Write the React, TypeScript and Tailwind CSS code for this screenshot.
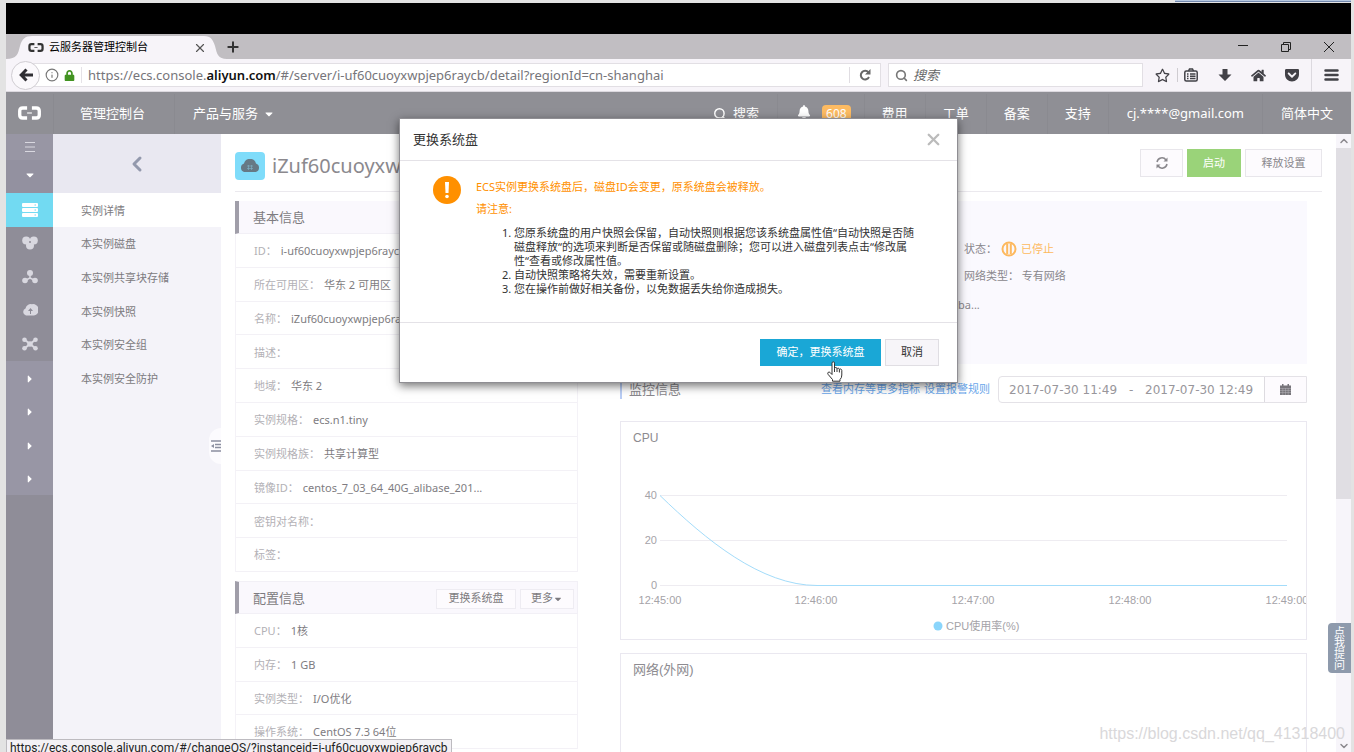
import type { ReactNode } from "react";
import { Search, X, Plus, Info, ChevronLeft, ChevronUp, ChevronDown } from "lucide-react";
import { FaBell, FaGetPocket, FaHome, FaLock, FaRegStar, FaCaretDown, FaCaretRight } from "react-icons/fa";

const menuItems = ["实例详情", "本实例磁盘", "本实例共享块存储", "本实例快照", "本实例安全组", "本实例安全防护"];

const basicInfo = [
  ["ID：", "i-uf60cuoyxwpjep6raycb"],
  ["所在可用区：", "华东 2 可用区"],
  ["名称：", "iZuf60cuoyxwpjep6raycbZ"],
  ["描述：", ""],
  ["地域：", "华东 2"],
  ["实例规格：", "ecs.n1.tiny"],
  ["实例规格族：", "共享计算型"],
  ["镜像ID：", "centos_7_03_64_40G_alibase_201..."],
  ["密钥对名称：", ""],
  ["标签：", ""],
];

const configInfo = [
  ["CPU：", "1核"],
  ["内存：", "1 GB"],
  ["实例类型：", "I/O优化"],
  ["操作系统：", "CentOS 7.3 64位"],
];

const timeTicks = [
  { x: 39, label: "12:45:00" },
  { x: 195, label: "12:46:00" },
  { x: 352, label: "12:47:00" },
  { x: 509, label: "12:48:00" },
  { x: 666, label: "12:49:00" },
];

const valueTicks = [
  { y: 73, label: "40" },
  { y: 118, label: "20" },
  { y: 163, label: "0" },
];

function AliyunLogo({ className }: { className?: string }) {
  return (
    <svg viewBox="0 0 24 14" className={className} fill="none" stroke="currentColor" strokeWidth="3.500">
      <path d="M9.500 1.800H5Q1.800 1.800 1.800 5V9Q1.800 12.200 5 12.200H9.500" />
      <path d="M14.500 1.800H19Q22.200 1.800 22.200 5V9Q22.200 12.200 19 12.200H14.500" />
      <path d="M9.500 7H14.500" strokeWidth="1.200" />
    </svg>
  );
}

function TabStrip() {
  return (
    <div className="flex h-[25px] items-end bg-[#c1bec2]">
      <div className="relative flex h-[23px] w-[221px] items-center pr-5 pl-[22px] text-black">
        <svg className="absolute inset-0 h-full w-full" viewBox="0 0 221 23" preserveAspectRatio="none" fill="#f7f4f9">
          <path d="M0 23C11 23 12 18 14 10C16 3 19 0 26 0H198C205 0 207 4 209 10C211 18 212 23 221 23Z" />
        </svg>
        <AliyunLogo className="relative h-[9px] w-4 shrink-0 text-[#333]" />
        <span className="relative ml-[5px] flex-1 text-[11px]">云服务器管理控制台</span>
        <button aria-label="关闭标签页" className="relative">
          <X className="size-3.5 text-[#555]" strokeWidth={2} />
        </button>
      </div>
      <button aria-label="新标签页" className="-ml-0.5 flex h-6 items-center">
        <Plus className="size-4 text-[#333]" strokeWidth={3} />
      </button>
      <div className="ml-auto flex h-full items-center gap-[33px] pr-[17px] text-[#222]">
        <button aria-label="最小化">
          <svg viewBox="0 0 10 10" className="size-2.5" stroke="currentColor"><path d="M0 3.500H10" /></svg>
        </button>
        <button aria-label="还原">
          <svg viewBox="0 0 10 10" className="size-2.5" fill="none" stroke="currentColor">
            <path d="M.5 2.500H7.500V9.500H.5Z" />
            <path d="M2.500 2.500V.5H9.500V7.500H7.500" />
          </svg>
        </button>
        <button aria-label="关闭">
          <svg viewBox="0 0 10 10" className="size-2.5" stroke="currentColor"><path d="M0 0L10 10M10 0L0 10" /></svg>
        </button>
      </div>
    </div>
  );
}

function AddressBar() {
  return (
    <div className="flex h-[33px] items-center border-b border-[#dcd9df] bg-[#f7f4f9] pl-[5px] text-[#424147]">
      <button aria-label="后退" className="z-10 flex size-[29px] shrink-0 items-center justify-center rounded-full border border-[#d0cdd2] bg-[#fbf9fc]">
        <svg viewBox="0 0 14 14" className="size-3.5" fill="none" stroke="#2f2e33" strokeWidth="3">
          <path d="M7.500 1.500L2.200 7L7.500 12.500M2.500 7H14" />
        </svg>
      </button>
      <div className="-ml-3 flex h-6 flex-1 items-center border border-[#e2dfe4] bg-white pl-4">
        <Info className="size-3.5 shrink-0 text-[#777]" strokeWidth={2} />
        <FaLock className="ml-[5px] size-[11px] shrink-0 text-[#429321]" />
        <div role="textbox" aria-label="地址" className="ml-1.5 flex-1 border-l border-[#e5e2e7] pl-1.5 text-[13px] leading-4 whitespace-nowrap text-[#76757a]">
          https://ecs.console.<span className="font-semibold text-[#111]">aliyun.com</span>/#/server/i-uf60cuoyxwpjep6raycb/detail?regionId=cn-shanghai
        </div>
        <button aria-label="刷新" className="flex h-4 w-[31px] items-center justify-center border-l border-[#e0dde2]">
          <svg viewBox="0 0 12 12" className="size-3" fill="none" stroke="#666" strokeWidth="2">
            <path d="M9.500 3.500A4.300 4.300 0 1 0 10 8" />
            <path d="M11.500 0V5.500H6Z" fill="#666" stroke="none" />
          </svg>
        </button>
      </div>
      <label className="ml-[7px] flex h-6 w-[255px] items-center border border-[#e2dfe4] bg-white pl-1.5">
        <Search className="size-[13px] shrink-0 text-[#777]" strokeWidth={3} />
        <input placeholder="搜索" aria-label="搜索" className="ml-[5px] w-full pt-0.5 text-[13px] italic outline-none placeholder:text-[#666]" />
      </label>
      <div className="ml-3 flex h-full items-center">
        <button aria-label="书签" className="w-4"><FaRegStar className="size-[15px]" /></button>
        <span className="mx-1.5 h-3.5 w-px bg-[#cfccd1]" />
        <button aria-label="书签列表">
          <svg viewBox="0 0 14 14" className="size-3.5" fill="none" stroke="currentColor" strokeWidth="1.500">
            <rect x=".8" y="3" width="12.400" height="10" rx="1.500" />
            <path d="M4.500 3L5.500 1H8.500L9.500 3M3 6H4.500M6 6H11.500M3 8.200H4.500M6 8.200H11.500M3 10.500H4.500M6 10.500H11.500" />
          </svg>
        </button>
        <button aria-label="下载" className="ml-5">
          <svg viewBox="0 0 14 14" className="size-3.5" fill="currentColor"><path d="M4.500 1H9.500V6.500H13.500L7 13L.5 6.500H4.500Z" /></svg>
        </button>
        <button aria-label="主页" className="ml-[19px]"><FaHome className="size-[15px]" /></button>
        <button aria-label="Pocket" className="ml-[18px]"><FaGetPocket className="size-4" /></button>
        <span className="ml-[11px] h-full w-px bg-[#dcd9df]" />
        <button aria-label="菜单" className="mx-3">
          <svg viewBox="0 0 15 12" className="h-3 w-[15px]" stroke="currentColor" strokeWidth="2.500" strokeLinecap="round">
            <path d="M1.500 1.500H13.500M1.500 6H13.500M1.500 10.500H13.500" />
          </svg>
        </button>
      </div>
    </div>
  );
}

function TopNav() {
  return (
    <nav className="flex h-[42px] items-stretch bg-[#8f8f95] pt-0.5 text-[13px] whitespace-nowrap text-white *:flex *:items-center *:border-[#8a8a90]">
      <a href="#" aria-label="首页" className="w-12 border-r pb-0.5 pl-3"><AliyunLogo className="h-3.5 w-[23px]" /></a>
      <a href="#" className="w-[121px] border-r pl-[26px]">管理控制台</a>
      <a href="#" className="pl-[18px]">产品与服务<FaCaretDown className="ml-[5px] size-3" /></a>
      <a href="#" className="ml-auto pr-[18px]"><Search className="mr-1.5 size-3.5" strokeWidth={2.500} />搜索</a>
      <a href="#" className="border-l px-[13px]">
        <FaBell className="mx-1.5 mb-1 size-3.5" />
        <span className="ml-[5px] rounded-sm bg-[#fdbb62] px-1 text-xs leading-[18px]">608</span>
      </a>
      <a href="#" className="border-l px-[17px]">费用</a>
      <a href="#" className="border-l px-[17px]">工单</a>
      <a href="#" className="border-l px-[17px]">备案</a>
      <a href="#" className="border-l px-[17px]">支持</a>
      <a href="#" className="border-l px-[18px]">cj.****@gmail.com</a>
      <a href="#" className="border-l px-[18px]">简体中文</a>
    </nav>
  );
}

function RailButton({ label, className, children }: { label: string; className: string; children: ReactNode }) {
  return (
    <button aria-label={label} className={`flex items-center justify-center ${className}`}>
      {children}
    </button>
  );
}

function ProductRail() {
  return (
    <aside className="w-[47px] shrink-0 bg-[#8f8d98] text-[#d9d8e0]">
      <button aria-label="展开" className="flex h-[26px] w-full items-center justify-center bg-[#9896a4]">
        <svg viewBox="0 0 10 10" className="size-2.5" stroke="currentColor"><path d="M0 .5H10M0 5H10M0 9.500H10" /></svg>
      </button>
      <button aria-label="产品" className="flex h-[33px] w-full items-center justify-center bg-[#9391a0] pb-1">
        <FaCaretDown className="size-3 text-white" />
      </button>
      <div className="grid h-[302px] auto-rows-fr">
        <RailButton label="云服务器" className="bg-[#72daf2] text-white">
          <svg viewBox="0 0 16 14" className="h-3.5 w-4" fill="currentColor">
            <rect width="16" height="4" rx="1" />
            <rect y="5" width="16" height="4" rx="1" />
            <rect y="10" width="16" height="4" rx="1" />
            <path d="M12.500 2H14M12.500 7H14M12.500 12H14" stroke="#72daf2" />
          </svg>
        </RailButton>
        <RailButton label="数据库" className="bg-[#8f8d98]">
          <svg viewBox="0 0 16 14" className="h-3.5 w-4" fill="currentColor">
            <circle cx="4.200" cy="4.500" r="4" />
            <circle cx="11.800" cy="4.500" r="4" />
            <circle cx="8" cy="9.500" r="4" />
            <circle cx="8" cy="6" r="1" fill="#8f8d98" />
          </svg>
        </RailButton>
        <RailButton label="负载均衡" className="bg-[#8f8d98]">
          <svg viewBox="0 0 16 14" className="h-3.5 w-4" fill="currentColor">
            <path d="M8 4V8L3 10.500M8 8L13 10.500" fill="none" stroke="currentColor" strokeWidth="1.500" />
            <circle cx="8" cy="3" r="3" />
            <circle cx="3" cy="10.500" r="2.800" />
            <circle cx="13" cy="10.500" r="2.800" />
          </svg>
        </RailButton>
        <RailButton label="对象存储" className="bg-[#8f8d98]">
          <svg viewBox="0 0 16 14" className="h-3.5 w-4" fill="currentColor">
            <path d="M4 12.500A3.700 3.700 0 0 1 3.500 5.500A5.300 5.300 0 0 1 10 1.200A5.700 5.700 0 0 1 12 12.500Z" />
            <path d="M8 11V8H6L8.500 5L11 8H9V11Z" fill="#8f8d98" />
          </svg>
        </RailButton>
        <RailButton label="专有网络" className="bg-[#8f8d98]">
          <svg viewBox="0 0 16 14" className="h-3.5 w-4" fill="currentColor">
            <path d="M3 3L13 11M13 3L3 11" stroke="currentColor" strokeWidth="2" />
            <circle cx="2.500" cy="2.800" r="2.300" />
            <circle cx="13.500" cy="2.800" r="2.300" />
            <circle cx="2.500" cy="11.200" r="2.300" />
            <circle cx="13.500" cy="11.200" r="2.300" />
            <circle cx="8" cy="7" r="2.800" />
          </svg>
        </RailButton>
        {["一", "二", "三", "四"].map((n) => (
          <RailButton key={n} label={`分组${n}`} className="bg-[#9896a5] pt-0.5 text-white">
            <FaCaretRight className="size-3" />
          </RailButton>
        ))}
      </div>
    </aside>
  );
}

function InstanceMenu() {
  return (
    <aside className="relative w-[168px] shrink-0 bg-[#f4f3f9]">
      <button aria-label="返回" className="flex h-[59px] w-full items-center justify-center bg-[#e9e8f1]">
        <ChevronLeft className="size-6 text-[#9399ad]" strokeWidth={3} />
      </button>
      <ul className="grid h-[202px] auto-rows-fr text-[11px] text-[#7d7b80]">
        {menuItems.map((item, i) => (
          <li key={item} className={i === 0 ? "bg-white" : ""}>
            <a href="#" className="flex h-full items-center pt-0.5 pl-7">{item}</a>
          </li>
        ))}
      </ul>
      <button aria-label="收起菜单" className="absolute top-[294px] right-0 flex h-9 w-3 items-center justify-end rounded-l-full bg-[#fcfbfe]">
        <svg viewBox="0 0 10 12" className="h-3 w-2.5" stroke="#8b8fa0" strokeWidth="1.500" fill="#8b8fa0">
          <path d="M0 1H10M4 4.500H10M4 7.500H10M0 11H10" />
          <path d="M3 4L0 6L3 8Z" stroke="none" />
        </svg>
      </button>
    </aside>
  );
}

function InfoRows({ rows, className }: { rows: string[][]; className: string }) {
  return (
    <dl className={`grid auto-rows-fr border-x border-[#f4f2f7] text-[11px] ${className}`}>
      {rows.map(([label, value]) => (
        <div key={label} className="flex items-center border-b border-[#f3f1f6] pt-0.5 pl-[18px] whitespace-nowrap">
          <dt className="text-[#b3b1b6]">{label}</dt>
          <dd className="ml-1 text-[#7e7c81]">{value}</dd>
        </div>
      ))}
    </dl>
  );
}

function CpuChart() {
  return (
    <svg viewBox="0 0 685 217" className="block w-full font-['Liberation_Sans','Noto_Sans_CJK_SC',sans-serif] text-[11px]" fill="#a5a3a8">
      {valueTicks.map((tick) => (
        <g key={tick.label}>
          <path d={`M39 ${tick.y}.500H666`} stroke="#eeecf1" />
          <text x="36" y={tick.y + 4} textAnchor="end">{tick.label}</text>
        </g>
      ))}
      <path d="M39 73.500C85 118 140 163.500 196 163.500H666" fill="none" stroke="#a3dcfa" />
      {timeTicks.map((tick) => (
        <text key={tick.label} x={tick.x} y="182" textAnchor="middle">{tick.label}</text>
      ))}
      <circle cx="317" cy="204" r="4.500" fill="#8ad5fb" />
      <text x="325" y="208">CPU使用率(%)</text>
      <text x="12" y="20" className="text-xs" fill="#8d8b90">CPU</text>
    </svg>
  );
}

function InstancePage() {
  return (
    <main className="min-w-0 flex-1 overflow-hidden bg-white pr-3.5 pl-3.5">
      <header className="flex h-[58px] items-center border-b border-[#ebe9ee] text-[11px]">
        <span className="mt-1.5 flex h-7 w-[30px] items-center justify-center rounded bg-[#7fdcfa]">
          <svg viewBox="0 0 22 14" className="h-3.5 w-[22px]" fill="#667985">
            <path d="M5 13A4.500 4.500 0 0 1 5 4.500A6.200 6.200 0 0 1 17 4.500A4.500 4.500 0 0 1 17 13Z" />
            <path d="M8 7H14M8 9.500H14M9.500 6V11M12.500 6V11" stroke="#7fb4c8" strokeWidth=".6" />
          </svg>
        </span>
        <h1 className="mt-1.5 ml-[7px] flex-1 text-xl text-[#8b898e]">iZuf60cuoyxwpjep6raycbZ</h1>
        <div className="flex gap-1 text-[#89878c]">
          <button aria-label="刷新" className="flex h-7 w-[43px] items-center justify-center border border-[#e8e6eb] bg-[#fdfbfe]">
            <svg viewBox="0 0 12 12" className="size-3" fill="none" stroke="currentColor" strokeWidth="1.500">
              <path d="M1 5A5 5 0 0 1 10 3M11 7A5 5 0 0 1 2 9" />
              <path d="M11.500 .5V4.500H7.500ZM.5 11.500V7.500H4.500Z" fill="currentColor" stroke="none" />
            </svg>
          </button>
          <button className="h-7 w-[54px] bg-[#9ad379] pt-0.5 text-white">启动</button>
          <button className="h-7 w-[77px] border border-[#e8e6eb] bg-[#fdfbfe] pt-0.5">释放设置</button>
        </div>
      </header>

      <div className="flex pt-[9px]">
        <div className="flex w-[343px] shrink-0 flex-col gap-[9px]">
          <section>
            <h2 className="flex h-[33px] items-center border-b border-l-4 border-[#f2f0f6] border-l-[#a09ea9] bg-[#faf8fd] pt-0.5 pl-3.5 text-[13px] text-[#7d7b80]">
              基本信息
            </h2>
            <InfoRows rows={basicInfo} className="h-[338px]" />
          </section>
          <section>
            <div className="flex h-[33px] items-center gap-1 border border-l-4 border-[#f2f0f6] border-l-[#a09ea9] bg-[#faf8fd] pt-0.5 pr-[3px] pl-3.5 text-[11px] text-[#7d7b80]">
              <h2 className="flex-1 text-[13px]">配置信息</h2>
              <button className="h-5 w-20 border border-[#eeecf2] bg-[#fdfbfe]">更换系统盘</button>
              <button className="flex h-5 w-[54px] items-center justify-center border border-[#eeecf2] bg-[#fdfbfe]">
                更多<FaCaretDown className="size-2.5" />
              </button>
            </div>
            <InfoRows rows={configInfo} className="h-[135px]" />
          </section>
        </div>

        <div className="mr-[15px] ml-[42px] min-w-0 flex-1">
          <section className="flex h-[163px] flex-col items-start gap-[11px] bg-[#faf9fe] pt-10 pl-[336px] text-[11px] leading-4 text-[#89878c]">
            <p className="flex items-center gap-1 pl-2">
              状态：
              <svg viewBox="0 0 16 16" className="size-4" fill="none" stroke="#fdb95e" strokeWidth="2">
                <circle cx="8" cy="8" r="6.500" />
                <path d="M6.200 3V13M9.800 3V13" />
              </svg>
              <span className="text-[#fdb95e]">已停止</span>
            </p>
            <p className="pl-2">网络类型： 专有网络</p>
            <p className="pt-0.5 pl-0.5">ba...</p>
          </section>

          <section>
            <div className="mt-3 flex h-[27px] items-center text-[11px]">
              <h2 className="flex-1 border-l-2 border-[#b9cdf5] pl-[7px] text-[13px] text-[#89878c]">监控信息</h2>
              <p className="mr-2 flex gap-1 text-[#68a5ea]">
                <a href="#">查看内存等更多指标</a>
                <a href="#">设置报警规则</a>
              </p>
              <div className="flex h-[27px] rounded-l-sm border border-[#e4e2e7] font-['DejaVu_Sans',sans-serif] text-xs text-[#98969b]">
                <input aria-label="开始时间" defaultValue="2017-07-30 11:49" className="w-[122px] pl-2.5 outline-none" />
                <span className="w-3 self-center pl-2">-</span>
                <input aria-label="结束时间" defaultValue="2017-07-30 12:49" className="w-[131px] pl-3 outline-none" />
                <button aria-label="选择日期" className="flex w-[42px] items-center justify-center border-l border-[#dddbe0] bg-[#fdfbfe]">
                  <svg viewBox="0 0 11 11" className="size-[11px]" fill="#77757a">
                    <path d="M0 1.500H2V0H3.500V1.500H7.500V0H9V1.500H11V11H0Z" />
                    <path d="M0 4.500H11M0 6.500H11M0 8.500H11M2.800 4V11M5.500 4V11M8.200 4V11" stroke="#b5b3b8" strokeWidth=".5" />
                  </svg>
                </button>
              </div>
            </div>
            <div className="mt-[18px] overflow-hidden border border-[#eae8f0]">
              <CpuChart />
            </div>
            <div className="mt-[13px] h-40 border border-[#eae8f0] px-3 py-1.5 font-['Liberation_Sans','Noto_Sans_CJK_SC',sans-serif] text-[13px] text-[#8d8b90]">
              网络(外网)
            </div>
          </section>
        </div>
      </div>
    </main>
  );
}

function ChangeDiskDialog() {
  return (
    <div role="dialog" aria-labelledby="dialog-title" className="relative h-fit w-[559px] border border-[#8f8e93] bg-white text-[11px] text-[#333] shadow-[0_3px_9px_rgba(0,0,0,0.55)]">
      <div className="flex h-[42px] items-center justify-between border-b border-[#e4e2e7] pr-3.5 pl-[13px]">
        <h2 id="dialog-title" className="text-[13px]">更换系统盘</h2>
        <button aria-label="关闭"><X className="size-[19px] text-[#bbb]" strokeWidth={3} /></button>
      </div>
      <div className="flex h-[161px] pt-[15px] pl-[33px]">
        <span className="flex size-7 shrink-0 items-center justify-center rounded-full bg-[#ff9000]">
          <svg viewBox="0 0 6 18" className="h-[18px] w-1.5" fill="#fff">
            <path d="M1 1H5L4.500 12H1.500Z" />
            <circle cx="3" cy="15.500" r="1.800" />
          </svg>
        </span>
        <div className="pl-[15px] whitespace-nowrap">
          <p className="leading-[22px] text-[#ff9000]">ECS实例更换系统盘后，磁盘ID会变更，原系统盘会被释放。</p>
          <p className="leading-[22px] text-[#ff9000]">请注意:</p>
          <ol className="mt-1.5 list-decimal pl-[38px] leading-[14px]">
            <li>
              您原系统盘的用户快照会保留，自动快照则根据您该系统盘属性值“自动快照是否随<br />
              磁盘释放“的选项来判断是否保留或随磁盘删除；您可以进入磁盘列表点击“修改属<br />
              性“查看或修改属性值。
            </li>
            <li>自动快照策略将失效，需要重新设置。</li>
            <li>您在操作前做好相关备份，以免数据丢失给你造成损失。</li>
          </ol>
        </div>
      </div>
      <div className="flex h-[60px] justify-end gap-1 border-t border-[#e4e2e7] pt-4 pr-[18px]">
        <button className="h-[27px] w-[121px] bg-[#1aa7d6] text-white">确定，更换系统盘</button>
        <button className="h-[27px] w-[54px] border border-[#e0dee3] bg-[#f7f5f9]">取消</button>
      </div>
      {/* hand pointer over the confirm button */}
      <svg viewBox="0 0 16 21" className="absolute right-[114px] bottom-0 h-[21px] w-4" fill="#fff" stroke="#333" strokeLinejoin="round">
        <path d="M5 12V2.200Q5 .8 6.300 .8T7.500 2.200V7.500Q7.700 6.500 8.800 6.500T10 7.800Q10.300 7 11.300 7.200T12.400 8.500Q12.800 7.800 13.700 8T14.800 9.500V14Q14.800 17 13 18.500V20.200H5.500V18.500L1.200 13.500Q.2 12 1.200 11.300T3.300 11.700L5 13.500Z" />
        <path d="M7.500 7.500V11M10 8V11M12.400 8.500V11.500" fill="none" />
      </svg>
    </div>
  );
}

export default function App() {
  return (
    <div className="h-screen overflow-hidden bg-[#e3e3e3] pr-[3px] pl-1.5 font-['Noto_Sans','Noto_Sans_CJK_SC',sans-serif]">
      <div className="relative flex h-full flex-col">
        <div className="flex h-[3px] shrink-0 justify-end">
          <span className="h-0.5 w-44 border-b border-[#7288ad] bg-[#b5c7df]" />
        </div>
        <div className="h-[31px] shrink-0 bg-black" />
        <div className="shrink-0">
          <TabStrip />
          <AddressBar />
          <TopNav />
        </div>
        <div className="flex min-h-0 flex-1">
          <ProductRail />
          <InstanceMenu />
          <InstancePage />
          <div className="flex w-[15px] shrink-0 flex-col items-center bg-[#f7f5fa] text-[#8b898e]">
            <ChevronUp className="my-px size-3" strokeWidth={3} />
            <span className="h-[351px] w-full bg-[#e0dee3]" />
            <ChevronDown className="mt-auto size-3" strokeWidth={3} />
          </div>
        </div>

        <div className="absolute inset-0 flex justify-center pt-[118px]">
          <ChangeDiskDialog />
        </div>

        <button className="absolute right-0 bottom-[79px] h-[50px] w-[23px] rounded-l-sm bg-[#8e9aac] px-1.5 text-[11px] leading-[11px] text-white">
          点我提问
        </button>
        <p className="absolute bottom-0 left-0 h-[13px] overflow-hidden border border-b-0 border-[#bdbbc0] bg-[#f3f1f5] px-[3px] font-['Roboto',sans-serif] text-xs leading-4 text-[#222]">
          https://ecs.console.aliyun.com/#/changeOS/?instanceid=i-uf60cuoyxwpjep6raycb
        </p>
        <p className="absolute right-1.5 bottom-1.5 font-['Liberation_Sans',sans-serif] text-base text-[#d9d8da]">
          https://blog.csdn.net/qq_41318400
        </p>
      </div>
    </div>
  );
}
